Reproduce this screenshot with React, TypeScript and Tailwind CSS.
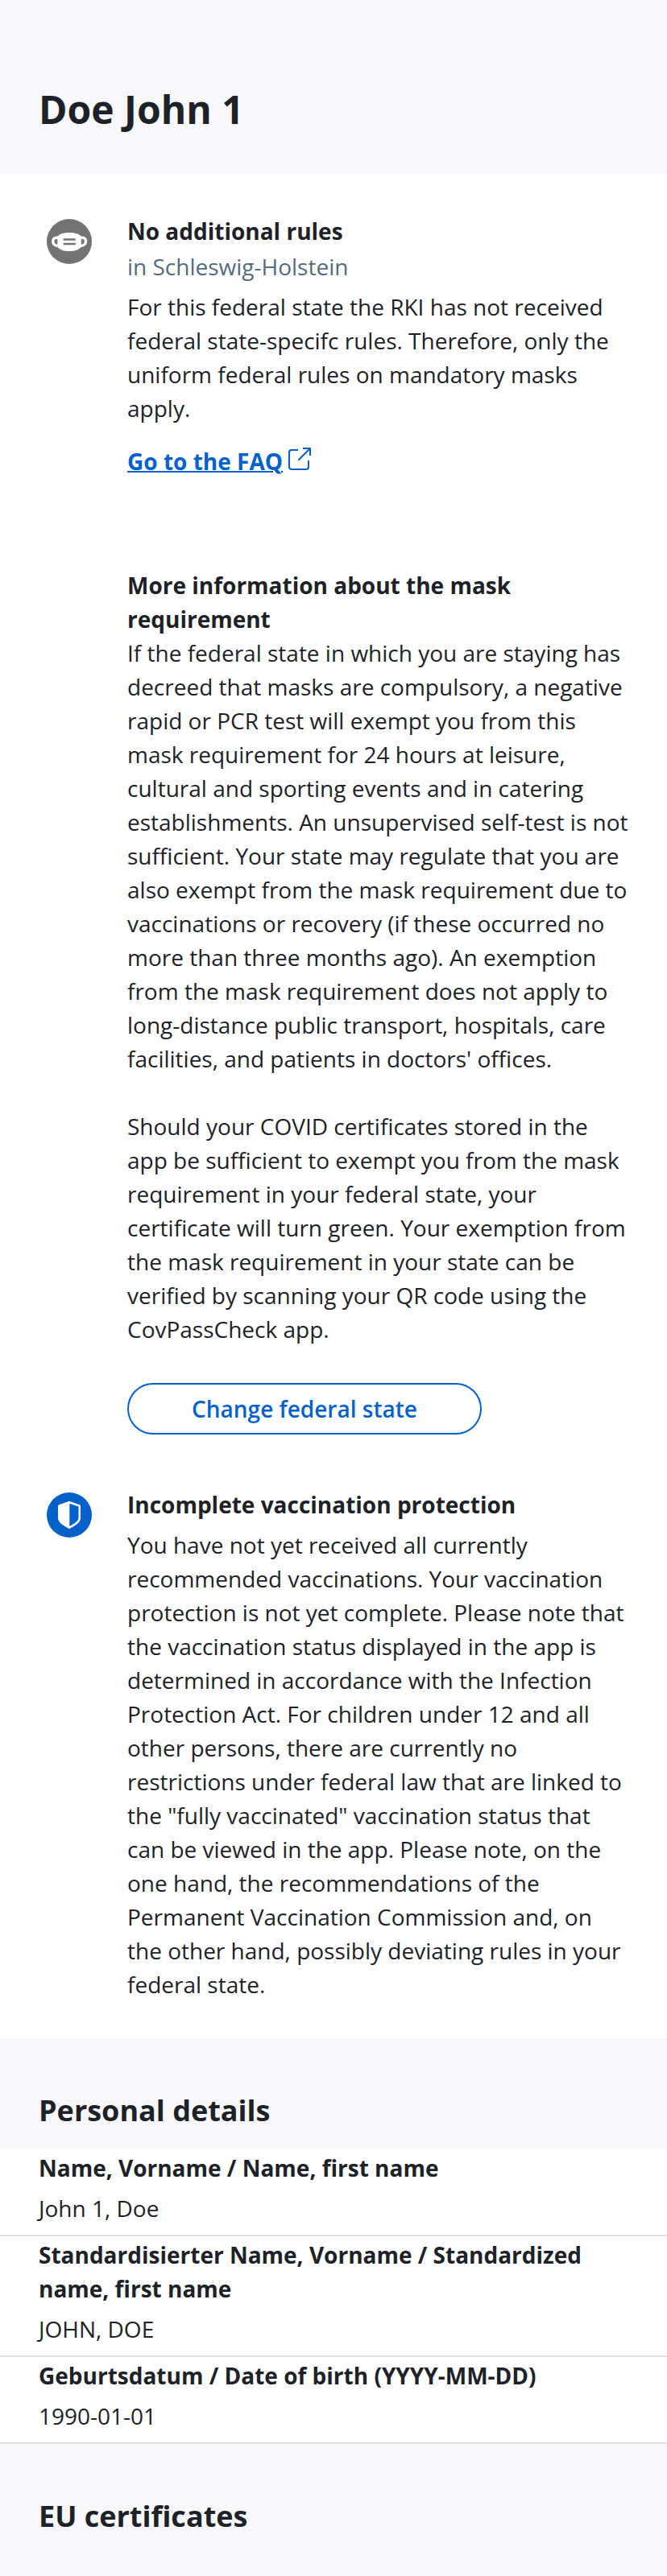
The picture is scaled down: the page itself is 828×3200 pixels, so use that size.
import type { ReactNode } from "react";

function MaskIcon() {
  return (
    <svg viewBox="0 0 56 56" className="size-14">
      <circle cx="28" cy="28" r="28" fill="#737373" />
      <path
        d="M14.5 23.2H12c-2.6 0-4.4 1.8-4.3 4.4.1 3.2 2.2 5.6 5.3 5.6h2M41.700 23.200H44.200c2.600 0 4.400 1.800 4.300 4.400-.1 3.200-2.200 5.600-5.300 5.600h-2"
        fill="none"
        stroke="#fff"
        strokeWidth="3.400"
      />
      <path
        d="M13.400 21.800C15.400 18.500 21 17 28 17s12.800 1.500 14.800 4.800v12.600C40.300 38 35 40 28 40s-12.300-2-14.600-5.600z"
        fill="#fff"
      />
      <path d="M21.700 25.500h13M21.700 31h13" stroke="#737373" strokeWidth="2.500" strokeLinecap="round" />
    </svg>
  );
}

function ShieldIcon() {
  return (
    <svg viewBox="0 0 56 56" className="size-14">
      <circle cx="28" cy="28" r="28" fill="#0561ca" />
      <path
        d="M28 10.800 40.800 15.200Q42 15.700 42 17V31.500C42 37.500 35 41.500 28 45.200 21 41.500 14 37.500 14 31.500V17Q14 15.700 15.200 15.200z"
        fill="#fff"
      />
      <path d="M28.300 13.800 39.500 17.600V31.500C39.500 35.500 34.500 38.800 28.300 42z" fill="#0561ca" />
    </svg>
  );
}

function ExternalIcon() {
  return (
    <svg viewBox="0 0 28 28" className="size-7" fill="none" stroke="#0561ca" strokeWidth="2">
      <path d="M12 3H4a3 3 0 0 0-3 3v18a3 3 0 0 0 3 3h18a3 3 0 0 0 3-3v-8" />
      <path d="M13 15 26.500 1.500M19 1h8v8" strokeLinecap="square" strokeLinejoin="miter" />
    </svg>
  );
}

function Note({ icon, children }: { icon: ReactNode; children: ReactNode }) {
  return (
    <section className="flex">
      <div className="ml-[10px] mr-11 mt-1.5 shrink-0">{icon}</div>
      <div className="min-w-0 flex-1">{children}</div>
    </section>
  );
}

const details = [
  ["Name, Vorname / Name, first name", "John 1, Doe"],
  ["Standardisierter Name, Vorname / Standardized name, first name", "JOHN, DOE"],
  ["Geburtsdatum / Date of birth (YYYY-MM-DD)", "1990-01-01"],
];

export default function App() {
  return (
    <div className="h-[3200px] w-[828px] overflow-hidden bg-[#f8f8fa] font-['Open_Sans',sans-serif] text-[28px] leading-[42px] text-[#1d2228]">
      <header className="h-[216px] px-12 pt-[103px]">
        <h1 className="text-[48px] font-bold leading-[65px]">Doe John 1</h1>
      </header>

      <main className="h-[2316px] bg-white px-12 pt-[50px]">
        <Note icon={<MaskIcon />}>
          <h2 className="font-bold">No additional rules</h2>
          <p className="mt-0.5 text-[#566b7b]">in Schleswig-Holstein</p>
          <p className="mt-2">
            For this federal state the RKI has not received federal state-specifc rules. Therefore, only the
            uniform federal rules on mandatory masks apply.
          </p>
          <a href="#" className="mt-6 flex gap-[7px] text-[#0561ca]">
            <span className="font-bold underline decoration-2">Go to the FAQ</span>
            <span className="mt-1">
              <ExternalIcon />
            </span>
          </a>
          <h3 className="mt-28 font-bold">More information about the mask requirement</h3>
          <p>
            If the federal state in which you are staying has decreed that masks are compulsory, a negative rapid
            or PCR test will exempt you from this mask requirement for 24 hours at leisure, cultural and sporting
            events and in catering establishments. An unsupervised self-test is not sufficient. Your state may
            regulate that you are also exempt from the mask requirement due to vaccinations or recovery (if these
            occurred no more than three months ago). An exemption from the mask requirement does not apply to
            long-distance public transport, hospitals, care facilities, and patients in doctors' offices.
          </p>
          <p className="mt-[42px]">
            Should your COVID certificates stored in the app be sufficient to exempt you from the mask requirement
            in your federal state, your certificate will turn green. Your exemption from the mask requirement in
            your state can be verified by scanning your QR code using the CovPassCheck app.
          </p>
          <button className="mt-[46px] flex h-16 w-[440px] items-center justify-center rounded-full border-2 border-[#0561ca] font-semibold text-[#0561ca]">
            Change federal state
          </button>
        </Note>
        <div className="mt-[66px]">
          <Note icon={<ShieldIcon />}>
            <h2 className="font-bold">Incomplete vaccination protection</h2>
            <p className="mt-2">
              You have not yet received all currently recommended vaccinations. Your vaccination protection is not
              yet complete. Please note that the vaccination status displayed in the app is determined in
              accordance with the Infection Protection Act. For children under 12 and all other persons, there are
              currently no restrictions under federal law that are linked to the "fully vaccinated" vaccination
              status that can be viewed in the app. Please note, on the one hand, the recommendations of the
              Permanent Vaccination Commission and, on the other hand, possibly deviating rules in your federal
              state.
            </p>
          </Note>
        </div>
      </main>

      <h2 className="h-[138px] px-12 pt-[65px] text-[36px] font-bold leading-[49px]">Personal details</h2>
      <dl className="bg-white">
        {details.map(([label, value]) => (
          <div key={label} className="border-b-2 border-[#e0e0e0] px-12 pb-3 pt-0.5">
            <dt className="font-bold">{label}</dt>
            <dd className="mt-2">{value}</dd>
          </div>
        ))}
      </dl>
      <h2 className="px-12 pt-[65px] text-[36px] font-bold leading-[49px]">EU certificates</h2>
    </div>
  );
}
